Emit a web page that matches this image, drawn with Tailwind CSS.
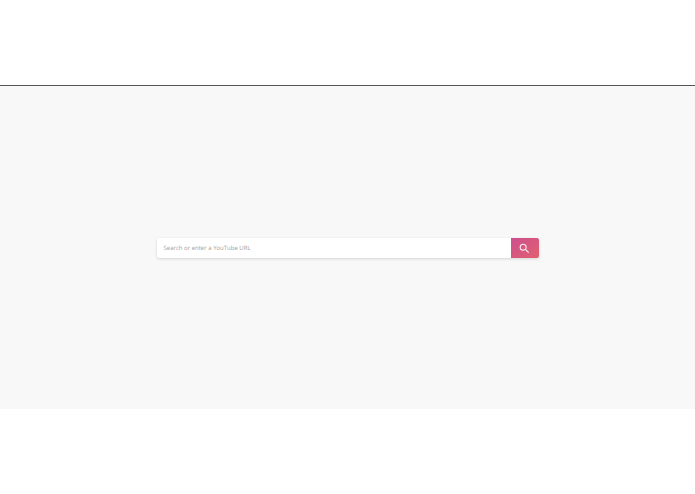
<!DOCTYPE html>
<html>
<head>
<meta charset="utf-8">
<script src="https://cdn.jsdelivr.net/npm/@tailwindcss/browser@4"></script>
</head>
<body class="bg-white font-['Open_Sans',sans-serif]">
<div class="h-[494px] flex flex-col overflow-hidden">
  <header class="h-[86px] shrink-0 bg-white border-b border-[#555]"></header>
  <main class="h-[323px] shrink-0 bg-[#f8f8f8] flex items-center justify-center">
    <div class="w-[382px] h-[20px] flex mt-[1px] rounded-[2px] bg-white shadow-[0_1px_3px_rgba(0,0,0,0.15)]">
      <div class="flex-1 flex items-center pl-[7px] text-[6px] text-[#a0a0a0] antialiased [text-rendering:geometricPrecision]">Search or enter a YouTube URL</div>
      <button class="w-[28px] h-[20px] flex items-center justify-center pr-[1px] rounded-r-[2px] bg-gradient-to-br from-[#cc4f8e] to-[#e25f6e]">
        <svg class="w-[13px] h-[13px] opacity-90" viewBox="0 0 24 24" fill="#fff"><path d="M15.5 14h-.79l-.28-.27A6.47 6.47 0 0 0 16 9.5 6.5 6.5 0 1 0 9.5 16c1.61 0 3.09-.59 4.23-1.57l.27.28v.79l5 4.99L20.49 19l-4.99-5zm-6 0C7.01 14 5 11.99 5 9.5S7.01 5 9.5 5 14 7.01 14 9.5 11.99 14 9.5 14z"/></svg>
      </button>
    </div>
  </main>
  <footer class="flex-1 bg-white"></footer>
</div>
</body>
</html>
